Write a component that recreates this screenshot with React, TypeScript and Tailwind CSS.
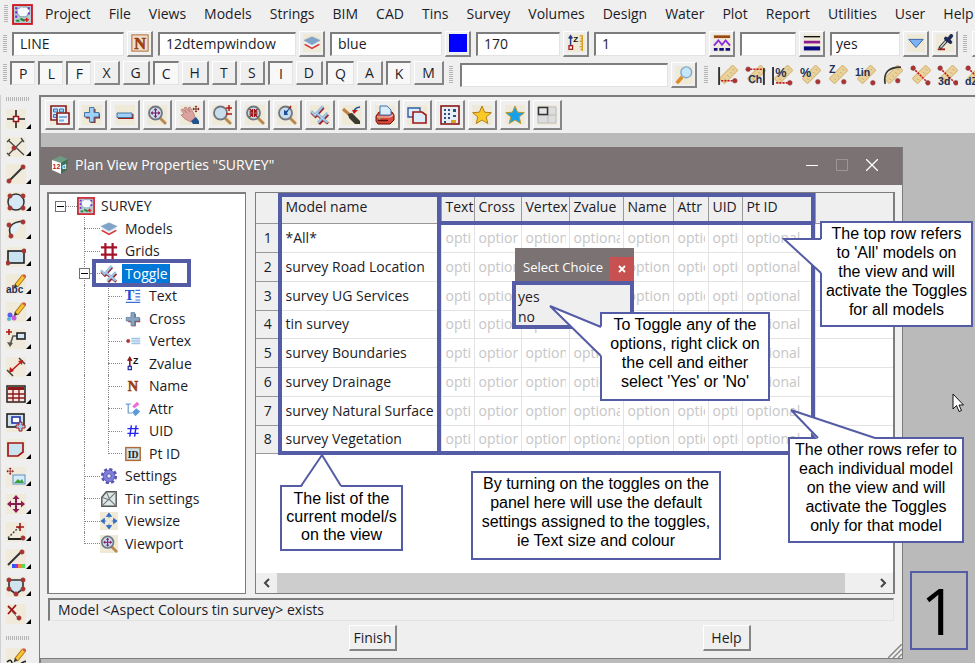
import { ReactNode } from 'react';
import clsx from 'clsx';

const DARK = '#8b1a1a';
const SKY = '#9fd0f5';

const ruler = (
    <g>
        <rect x="-9" y="-3.5" width="18" height="7" rx="1" transform="translate(11 9) rotate(-45)" fill="#ead29c" stroke="#d6b878" />
        <path d="M7 13l1 1M10 10l1 1M13 7l1 1M15 4l1 1" stroke="#a9853f" strokeWidth=".8" />
    </g>
);

const lens = (
    <>
        <path d="M13 13l5 5" stroke="#b98a4e" strokeWidth="3" strokeLinecap="round" />
        <circle cx="8.500" cy="8" r="6.500" fill="#c9dcec" stroke="#6f7780" strokeWidth="1.800" />
    </>
);

const ticks = (
    <>
        <path d="M1.500 7.500l4 4L13.500 2.500M8 10.500l10 8M18 9.500l-9 9.500" fill="none" stroke="#a01c28" strokeWidth="2.800" />
        <path d="M1 6l4 4L13 1M7.500 9l10 8.500M17.500 8l-9.500 9.500" fill="none" stroke="#8fb6da" strokeWidth="2.600" />
        <path d="M1 6l4 4L13 1M7.500 9l10 8.500M17.500 8l-9.500 9.500" fill="none" stroke="#b8d6ee" strokeWidth="1" />
    </>
);

const pencil = (
    <>
        <path d="M18 2L10 12" stroke="#a56a14" strokeWidth="4.600" />
        <path d="M18 2L10.500 11.500" stroke="#f6c433" strokeWidth="3" />
        <path d="M17 1l3 2" stroke="#d9534f" strokeWidth="2.500" />
        <path d="M9 10l2.500 2.500-4 2z" fill="#333" />
    </>
);

const dot = (x: number, y: number) => <circle cx={x} cy={y} r="2.200" fill="#b03030" stroke="#8d4a4a" strokeWidth=".6" />;

const moveArrows = (color: string) => (
    <path d="M10 1l3.500 4h-2.500v4h4V6.500L19 10l-4 3.500V11h-4v4h2.500L10 19l-3.500-4H9v-4H5v2.500L1 10l4-3.500V9h4V5H6.500z" fill={color} />
);

const magnet = (x: number, y: number, s: number, color: string) => (
    <g transform={`translate(${x} ${y}) scale(${s})`}>{moveArrows(color)}</g>
);

const nLetter = (
    <text x="10" y="16.500" textAnchor="middle" fontSize="18" fontWeight="700" fontFamily="Liberation Serif, serif" fill="#a8410e" stroke="#8d360c" strokeWidth=".6">N</text>
);

const small = (x: number, y: number, text: string, size = 9, color = '#22305a') => (
    <text x={x} y={y} fontSize={size} fontWeight="700" fontFamily="Liberation Sans, sans-serif" fill={color}>{text}</text>
);

const star = (fill: string, stroke: string) => (
    <path d="M10 1l2.600 6.200 6.700.5-5.100 4.300 1.600 6.500L10 15l-5.800 3.500 1.600-6.500L.7 7.700l6.700-.5z" fill={fill} stroke={stroke} />
);

const icons: Record<string, ReactNode> = {
    app: (
        <>
            <rect x="1" y="1" width="18" height="18" fill="#b4ccd2" stroke="#cf1b24" strokeWidth="1.800" />
            <path d="M5 7q-1-3 2-3 1-2 4-1 4-1 5 2 2 3-1 5-1 3-4 2-4 1-5-2-2-1-1-3z" fill="#f6fbff" stroke="#8fa9b8" />
            <path d="M3 4h2M3 8h2M3 12h2M15 4h2M15 9h2" stroke="#7b2bd0" strokeWidth="2" />
            <path d="M4 16h3M8 14l4 2" stroke="#1d8a3a" strokeWidth="2" />
            <path d="M14 13v4M12 15h4" stroke="#e01b1b" strokeWidth="1.500" />
        </>
    ),
    cube: (
        <>
            <path d="M10 1l8 3-7 4-9-3z" fill="#6d9b84" />
            <path d="M2 5l9 3v11l-9-4z" fill="#fff" />
            <path d="M11 8l7-4-1 11-6 4z" fill="#3f7159" />
            {small(2.5, 14, '12', 7, '#c41919')}
            {small(12, 14, 'd', 7, '#fff')}
        </>
    ),
    name: (
        <>
            <rect x="1" y="1" width="18" height="18" fill="#f0dfcb" stroke="#a8622f" />
            {nLetter}
        </>
    ),
    nameBare: nLetter,
    models: (
        <>
            <path d="M1 12l9 5 9-5-9-4z" fill="#d83434" />
            <path d="M1 10l9 5 9-5-9-4z" fill="#e8eef5" />
            <path d="M1 7l9 5 9-5-9-4z" fill="#7fa3c9" stroke="#8aa6c2" strokeWidth=".6" />
        </>
    ),
    blue: <rect width="20" height="20" fill="#0000ff" />,
    zruler: (
        <>
            <path d="M4 14V3M2 5l2-3 2 3" fill="none" stroke="#243a8f" strokeWidth="1.600" />
            <rect x="2.200" y="13" width="4" height="4" fill="#fff" stroke="#a01616" strokeWidth="1.400" />
            {small(7, 9, 'Z', 9, '#111')}
            <path d="M17 1v18M14 2h3M15 5h2M14 8h3M15 11h2M14 14h3M15 17h2" stroke="#d3a029" strokeWidth="1.500" />
        </>
    ),
    zvalue: (
        <>
            <path d="M6 14V3M3.500 6L6 2l2.500 4" fill="none" stroke="#8b1a1a" strokeWidth="2" />
            <rect x="4" y="13" width="4" height="4" fill="#fff" stroke="#2432a8" strokeWidth="1.600" />
            {small(10, 10, 'Z', 11, '#111')}
        </>
    ),
    lineStyle: (
        <>
            <path d="M1 3h18" stroke="#9a4a10" strokeWidth="3" />
            <path d="M1 13l5-6 4 5 4-5 5 6" fill="none" stroke="#8a2be2" strokeWidth="2" />
            <path d="M1 17h4M7 17h5M14 17h5" stroke="#101080" strokeWidth="3" />
        </>
    ),
    weight: (
        <>
            <path d="M1 3h18" stroke="#111" strokeWidth="1.500" />
            <path d="M1 9h18" stroke="#8b1a8b" strokeWidth="3" />
            <path d="M1 16h18" stroke="#0a0a80" strokeWidth="4.500" />
        </>
    ),
    down: <path d="M2 6h16l-8 9z" fill="#7fb2f5" stroke="#2e5ca8" />,
    dropper: (
        <>
            <path d="M2 17h8" stroke="#a01616" strokeWidth="2" />
            <path d="M4 16l8-9" stroke="#333" strokeWidth="3.600" />
            <path d="M5 15l6-7" stroke="#cfd8e0" strokeWidth="1.500" />
            <path d="M11 5l5 4M13 7l4-5" stroke="#1c2a55" strokeWidth="4" strokeLinecap="round" />
        </>
    ),
    search: (
        <>
            <path d="M8 12l-6 7" stroke="#e08a2b" strokeWidth="4" />
            <circle cx="12.500" cy="7" r="6" fill="#c3e6fa" stroke="#7fa8c9" strokeWidth="1.500" />
        </>
    ),
    rulerOffset: <>{ruler}<path d="M2 2v17" stroke="#333" strokeWidth="1.800" /><path d="M4 15h11" stroke="#c41919" strokeDasharray="2 1" strokeWidth="1.500" />{dot(17, 15)}</>,
    rulerCh: <>{ruler}<path d="M18 3v16" stroke="#333" strokeWidth="1.800" /><path d="M5 4h11" stroke="#c41919" strokeDasharray="2 1" strokeWidth="1.500" />{dot(3, 4)}{small(3, 17, 'Ch', 10)}</>,
    rulerGrade: <>{ruler}<path d="M1 2v17" stroke="#333" strokeWidth="1.800" /><path d="M4 17h11" stroke="#c41919" strokeDasharray="2 1" strokeWidth="1.500" />{dot(17, 17)}{small(3, 11, '%', 12)}</>,
    rulerPercent: <>{ruler}{dot(17, 16)}{small(0, 11, '%', 12)}</>,
    rulerZ: <>{ruler}{dot(16, 16)}{small(2, 8, 'Z', 10)}</>,
    rulerIn: <>{ruler}{dot(17, 17)}{small(0, 10, '1in', 10)}</>,
    rulerArc: <>{ruler}<path d="M3 18Q0 2 18 2" fill="none" stroke="#333" strokeWidth="1.600" />{dot(15, 15)}</>,
    ruler3: <>{ruler}<path d="M3 3l14 14" stroke="#c41919" strokeDasharray="2 1" strokeWidth="1.500" />{dot(3, 3)}{dot(17, 17)}</>,
    ruler3d: <>{ruler}<path d="M3 3l14 14" stroke="#c41919" strokeDasharray="2 1" strokeWidth="1.500" />{dot(3, 3)}{dot(18, 17)}{small(1, 19, '3d', 10)}</>,
    rulerDz: <>{ruler}<path d="M3 3l14 14" stroke="#c41919" strokeDasharray="2 1" strokeWidth="1.500" />{dot(3, 3)}{small(0, 19, 'dZ', 10)}</>,
    windows: (
        <>
            <path d="M1 1h15v14H1z" fill="#dcecfa" stroke={DARK} strokeWidth="1.600" />
            <path d="M3.500 4h4v3h-4zM9.500 4h4v3h-4zM3.500 9.500h3v3h-3z" fill={SKY} stroke="#3c72b5" />
            <path d="M7 8h12v11H7z" fill="#eaf4fd" stroke={DARK} strokeWidth="1.600" />
            <path d="M9 12h8M9 15.500h5" stroke="#7fb0e0" strokeWidth="2" />
        </>
    ),
    plus: (
        <>
            <path d="M8.500 4h5v4.500H18v5h-4.500V18h-5v-4.500H4v-5h4.500z" fill="#a01c1c" />
            <path d="M7.500 2.500h4.500v5h5v4.500h-5v5H7.500v-5h-5V7.500h5z" fill={SKY} stroke="#4775a8" />
        </>
    ),
    minus: (
        <>
            <path d="M3 9h15.500v5H3z" fill="#a01c1c" />
            <path d="M2 8h15v4.500H2z" fill={SKY} stroke="#4775a8" />
        </>
    ),
    zoomExtents: <>{lens}{magnet(3, 2.5, 0.55, '#7b1560')}</>,
    pan: (
        <>
            <path d="M1 5l2-1 4 4-3-5 2-1 4 5-2-4 2-1 4 7 1 4-4 4-6-3-4-4 3-1z" fill="#dba3a0" stroke="#b27c78" strokeWidth=".8" />
            <path d="M11 16l5-4 3 4v3h-6z" fill="#24528c" />
            {magnet(12, 0, 0.4, '#7b1515')}
        </>
    ),
    zoomInOut: <>{lens}<path d="M14 3h6M17 0v6M14 9h6" stroke="#b01616" strokeWidth="1.500" /></>,
    zoomShrink: <>{lens}<path d="M4.500 4l3 3v-3M7.500 7h-3M12.500 4l-3 3v-3M9.500 7h3M4.500 12l3-3v3M7.500 9h-3M12.500 12l-3-3v3M9.500 9h3" fill="none" stroke="#9b1515" strokeWidth="1.300" /></>,
    zoomPrev: <>{lens}<path d="M7 10V5l2 1 4-3-3 5 1 2z" fill="#1f4e9b" /><path d="M12 4l2-3" stroke="#a01616" strokeWidth="1.500" /></>,
    toggle: ticks,
    brush: (
        <>
            <path d="M1 4l8 7" stroke="#c08040" strokeWidth="3" />
            <path d="M6 9l4-1 8 8v3h-5l-6-6z" fill="#3a3a30" />
            <path d="M12 7Q12 3 18 2" fill="none" stroke="#1f4e9b" strokeWidth="1.500" />
            <path d="M10 5h6l-4 4z" fill="#c41919" />
        </>
    ),
    printer: (
        <>
            <path d="M1 11l3-4h13l2 3v5l-4 4H3l-2-3z" fill="#d84a3c" stroke="#701010" />
            <path d="M5 1h7l4 4v5H5z" fill="#dcecfa" stroke="#3c72b5" />
            <path d="M2 12h13l3-2" fill="none" stroke="#f4d6d0" strokeWidth="1.200" />
            <path d="M3 15.500h10" stroke="#5a1010" strokeWidth="1.500" />
            <circle cx="4.500" cy="13.500" r="1" fill="#4be04b" />
        </>
    ),
    copies: (
        <>
            <path d="M1 3h12v9H1z" fill="#dcecfa" stroke="#2d5fa5" strokeWidth="1.400" />
            <path d="M6 7h9l4 3v8H6z" fill="#dcecfa" stroke="#a01616" strokeWidth="1.600" />
        </>
    ),
    calculator: (
        <>
            <rect x="1" y="1" width="18" height="18" fill="#e8eef5" stroke={DARK} strokeWidth="1.600" />
            <path d="M4 4h2v2H4zM8 4h2v2H8zM13 4h3v3h-3zM4 8h2v2H4zM8 8h2v2H8zM4 12h2v2H4zM8 12h2v2H8zM4 16h2v2H4zM13 10h3v2h-3z" fill="#2f4f7d" />
            <path d="M11 15h5v3h-5z" fill="#d9a520" />
        </>
    ),
    starGold: star('#fbc926', '#b07d1c'),
    starBlue: star('#18a0e8', '#b59a3a'),
    layout: (
        <>
            <path d="M1 2h18v16H1z" fill="#ddd" stroke="#bbb" />
            <path d="M1 10h18M11 2v16" stroke="#bbb" />
            <path d="M1.500 2.500h9v7h-9z" fill="#e6e6e6" stroke="#333" strokeWidth="1.500" />
        </>
    ),
    point: (
        <>
            <path d="M10 1v18M1 10h18" stroke="#222" strokeWidth="1.600" />
            <rect x="7.500" y="7.500" width="5" height="5" fill="#fff" stroke="#a01616" strokeWidth="1.500" />
        </>
    ),
    intersect: <><path d="M2 3l16 15M2 18L17 3M1 5l3-3M15 1l3 4M1 16l3 3" stroke="#444" strokeWidth="1.300" />{dot(8, 11)}</>,
    line: <><path d="M3 17L17 3" stroke="#333" strokeWidth="2" />{dot(3, 17)}{dot(17, 3)}</>,
    circle: <><circle cx="10" cy="10" r="8" fill="#d4e9f5" stroke="#333" strokeWidth="1.500" />{dot(4, 4)}{dot(17, 4)}{dot(4, 16)}{dot(17, 16)}</>,
    arc: <><path d="M5 17Q-1 4 17 2L11 12z" fill="#e3f0f7" /><path d="M5 17Q-1 4 17 2" fill="none" stroke="#333" strokeWidth="1.600" />{dot(5, 17)}{dot(3, 6)}{dot(17, 3)}</>,
    rect: <><rect x="2" y="4" width="16" height="12" fill="#c9e4f0" stroke="#222" strokeWidth="1.600" />{dot(2, 16)}{dot(18, 4)}</>,
    abc: <>{pencil}{small(0, 19, 'abc', 10)}</>,
    paint: <>{pencil}<circle cx="4" cy="13" r="2.500" fill="#5c5cf0" /><circle cx="8" cy="16" r="2.500" fill="#c95cd8" /><circle cx="3" cy="17" r="2" fill="#4ab8e0" /></>,
    leader: (
        <>
            <path d="M3 0v6M0 3h6" stroke="#b01616" strokeWidth="1.600" />
            <path d="M11 7H7L4 16" fill="none" stroke="#555" strokeWidth="1.600" />
            <path d="M1 13l3 5 3-4z" fill="#555" />
            <rect x="11" y="4" width="8" height="6" fill="#d4e9f5" stroke="#222" strokeWidth="1.600" />
        </>
    ),
    dimension: (
        <>
            <path d="M1 13l6 6M13 1l6 6" stroke="#444" strokeWidth="1.600" />
            <path d="M5 14L15 5" stroke="#c41919" strokeWidth="1.600" />
            <path d="M3 16l1-6 4 4zM17 3l-5 1 4 4z" fill="#c41919" />
        </>
    ),
    table: (
        <>
            <rect x="1" y="2" width="18" height="16" fill="#f6e5e5" stroke="#222" strokeWidth="1.500" />
            <path d="M2 3h16v3H2z" fill={DARK} />
            <path d="M1 10h18M1 14h18M7 5v13M13 5v13" stroke={DARK} strokeWidth="1.400" />
        </>
    ),
    insert: (
        <>
            <rect x="1" y="2" width="17" height="13" fill="#cfe2f0" stroke="#222" strokeWidth="1.600" />
            <rect x="6" y="5" width="8" height="6" fill="#fff" stroke="#2432a8" strokeWidth="1.600" />
            <path d="M13 10h3v3h3v3h-3v3h-3v-3h-3v-3h3z" fill={SKY} stroke="#a01616" />
        </>
    ),
    polygon: <path d="M2 4h15v9l-5 4H2z" fill="#c9e4ee" stroke="#a01616" strokeWidth="1.700" />,
    image: (
        <>
            {magnet(0, 0, 0.42, '#8b1a1a')}
            <rect x="7" y="8" width="12" height="9" fill="#d6ecfb" stroke="#5a8fc8" />
            <path d="M8 16l4-4 2 2 2-2 2 4z" fill="#3da03d" />
        </>
    ),
    move: moveArrows('#8b1a50'),
    angle: <><path d="M2 17h15" stroke="#222" strokeWidth="2" /><path d="M2 16L13 5" stroke="#444" strokeDasharray="2 1.500" strokeWidth="1.500" /><path d="M14 1v8M10 5h8" stroke="#a01616" strokeWidth="1.600" />{dot(17, 16)}</>,
    lineColour: (
        <>
            <path d="M2 16L15 3" stroke="#333" strokeWidth="2" />
            {dot(16, 3)}
            <path d="M6 17h3" stroke="#2b5cf0" strokeWidth="4" />
            <path d="M9 17h3" stroke="#b22bd0" strokeWidth="4" />
            <path d="M12 17h3" stroke="#f08a2b" strokeWidth="4" />
            <path d="M15 17h4" stroke="#57d957" strokeWidth="4" />
        </>
    ),
    shape: <><path d="M3 3h14v9l-7 5-7-5z" fill="#cfe4ee" stroke="#333" strokeWidth="1.600" />{dot(3, 3)}{dot(17, 3)}{dot(3, 12)}{dot(17, 12)}{dot(10, 17)}</>,
    remove: <><path d="M2 2l8 8M10 1L2 10" stroke="#a01616" strokeWidth="1.800" /><path d="M6 8l6 6" stroke="#888" />{dot(13, 14)}</>,
    sketch: <>{pencil}<path d="M1 14q4-4 5 1t8 1 5-2" fill="none" stroke="#222" strokeWidth="1.600" /></>,
    grids: <path d="M6 1v18M14 1v18M1 6h18M1 14h18" stroke="#a5122a" strokeWidth="2.400" />,
    textRow: (
        <>
            <text x="-1" y="15" fontSize="19" fontWeight="700" fontFamily="Liberation Serif, serif" fill="#1c4fd0">T</text>
            <path d="M13 3h6M13 7h6M13 11h6M13 15h6M1 18h18" stroke="#3f6fd6" strokeWidth="1.500" />
        </>
    ),
    crossBare: (
        <>
            <path d="M8.500 3.500h5v5.500H19v5h-5.500v5h-5v-5H4V9h4.500z" fill="#a83a30" />
            <path d="M7.500 2h4.500v6h6v4.500h-6v6H7.500v-6h-6V8h6z" fill="#86a5c4" stroke="#6482a2" />
        </>
    ),
    vertex: <><path d="M8 7h11M8 10h11M8 13h11" stroke="#9fc3e6" strokeWidth="2" />{dot(4, 10)}</>,
    attr: (
        <>
            <path d="M1 4h6M4 4v11h5" fill="none" stroke="#6d9bd0" strokeWidth="1.500" />
            <path d="M9 7l6-6 3 3-6 5z" fill="#ea70d6" />
            <path d="M9 14l5-5 5 4-6 6z" fill="#5a9be0" />
        </>
    ),
    hash: <path d="M8 3L6 17M14 3l-2 14M3 7h14M3 13h14" stroke="#2424f0" strokeWidth="1.800" />,
    id: (
        <>
            <rect x="1" y="2" width="18" height="16" fill="#cfe2ea" stroke="#b06a38" strokeWidth="1.800" />
            <text x="10" y="14.500" textAnchor="middle" fontSize="12" fontWeight="700" fontFamily="Liberation Serif, serif" fill="#222">ID</text>
        </>
    ),
    settings: (
        <>
            <circle cx="10" cy="10" r="7.500" fill="none" stroke="#5555b0" strokeWidth="3" strokeDasharray="3.500 2.400" />
            <circle cx="10" cy="10" r="6.500" fill="#8080dc" stroke="#5a5ab8" />
            <circle cx="10" cy="10" r="2.500" fill="#e4e4fa" stroke="#4b4ba8" />
        </>
    ),
    tin: (
        <>
            <path d="M7 2h11v16H2V8z" fill="#dde9e8" stroke="#555" strokeWidth="1.600" />
            <path d="M2 18L18 2M7 2l4 9 7 7M2 8l9 3" fill="none" stroke="#777" strokeWidth="1.200" />
        </>
    ),
    viewsize: <path d="M10 1l3 4h-6zM10 19l3-4h-6zM1 10l4-3v6zM19 10l-4-3v6zM10 5v2M10 13v2M5 10h2M13 10h2" fill="#2f6bc4" stroke="#2f6bc4" strokeWidth=".8" />,
};

function Icon({ name, className = 'size-5' }: { name: string; className?: string }) {
    return (
        <svg viewBox="0 0 20 20" className={clsx('shrink-0', className)} aria-hidden="true">
            {icons[name]}
        </svg>
    );
}

const raised = 'border-t border-l border-r-2 border-b-2 border-t-white border-l-white border-r-[#858585] border-b-[#858585] bg-[#efefef]';
const sunken = 'border-t-2 border-l-2 border-r border-b border-t-[#7d7d7d] border-l-[#7d7d7d] border-r-[#e3e3e3] border-b-[#e3e3e3]';

const menus = ['Project', 'File', 'Views', 'Models', 'Strings', 'BIM', 'CAD', 'Tins', 'Survey', 'Volumes', 'Design', 'Water', 'Plot', 'Report', 'Utilities', 'User', 'Help'];

const fields = [
    { label: 'String name', value: 'LINE', icon: 'name', width: 'w-28' },
    { label: 'Model', value: '12dtempwindow', icon: 'models', width: 'w-[138px]' },
    { label: 'Colour', value: 'blue', icon: 'blue', width: 'w-28' },
    { label: 'Height', value: '170', icon: 'zruler', width: 'w-[84px]' },
    { label: 'Line style', value: '1', icon: 'lineStyle', width: 'w-28' },
    { label: 'Weight', value: '', icon: 'weight', width: 'w-14' },
];

const snaps = 'PLFXGCHTSIDQAKM'.split('');
const activeSnaps = 'PLFCIQK';

const measureTools = ['rulerOffset', 'rulerCh', 'rulerGrade', 'rulerPercent', 'rulerZ', 'rulerIn', 'rulerArc', 'ruler3', 'ruler3d', 'rulerDz'];

const viewTools = ['windows', 'plus', 'minus', 'zoomExtents', 'pan', 'zoomInOut', 'zoomShrink', 'zoomPrev', 'toggle', 'brush', 'printer', 'copies', 'calculator', 'starGold', 'starBlue', 'layout'];

const drawTools = ['point', 'intersect', 'line', 'circle', 'arc', 'rect', 'abc', 'paint', 'leader', 'dimension', 'table', 'insert', 'polygon', 'image', 'move', 'angle', 'lineColour', 'shape', 'remove'];

const tree = [
    { label: 'SURVEY', icon: 'app', level: 0 },
    { label: 'Models', icon: 'models', level: 1 },
    { label: 'Grids', icon: 'grids', level: 1 },
    { label: 'Toggle', icon: 'toggle', level: 1 },
    { label: 'Text', icon: 'textRow', level: 2 },
    { label: 'Cross', icon: 'crossBare', level: 2 },
    { label: 'Vertex', icon: 'vertex', level: 2 },
    { label: 'Zvalue', icon: 'zvalue', level: 2 },
    { label: 'Name', icon: 'nameBare', level: 2 },
    { label: 'Attr', icon: 'attr', level: 2 },
    { label: 'UID', icon: 'hash', level: 2 },
    { label: 'Pt ID', icon: 'id', level: 2 },
    { label: 'Settings', icon: 'settings', level: 1 },
    { label: 'Tin settings', icon: 'tin', level: 1 },
    { label: 'Viewsize', icon: 'viewsize', level: 1 },
    { label: 'Viewport', icon: 'zoomExtents', level: 1 },
];

const columns = [
    { label: 'Text', width: 'w-[33px]' },
    { label: 'Cross', width: 'w-[47px]' },
    { label: 'Vertex', width: 'w-[48px]' },
    { label: 'Zvalue', width: 'w-[54px]' },
    { label: 'Name', width: 'w-[50px]' },
    { label: 'Attr', width: 'w-[35px]' },
    { label: 'UID', width: 'w-[34px]' },
    { label: 'Pt ID', width: 'w-[73px]' },
];

const models = ['*All*', 'survey Road Location', 'survey UG Services', 'tin survey', 'survey Boundaries', 'survey Drainage', 'survey Natural Surface', 'survey Vegetation'];

function Grip({ horizontal = false }: { horizontal?: boolean }) {
    return horizontal ? (
        <div className="h-1 w-6 shrink-0 bg-[repeating-linear-gradient(90deg,#b5b5b5_0_1px,transparent_1px_2px)]" />
    ) : (
        <div className="h-[18px] w-1 shrink-0 bg-[repeating-linear-gradient(180deg,#b5b5b5_0_1px,transparent_1px_2px)]" />
    );
}

function MenuBar() {
    return (
        <nav className="flex h-7 items-center pl-1">
            <Grip />
            <Icon name="app" className="ml-1 size-[21px]" />
            <div className="ml-3 flex gap-[18px]">
                {menus.map((menu) => (
                    <button key={menu} type="button">{menu}</button>
                ))}
            </div>
        </nav>
    );
}

function IconButton({ icon, label }: { icon: string; label: string }) {
    return (
        <button type="button" aria-label={label} className={clsx('flex size-[26px] shrink-0 items-center justify-center', raised)}>
            <Icon name={icon} className="size-[18px] bg-[#efe9d8]" />
        </button>
    );
}

function PropertyBar() {
    return (
        <div className="flex h-[31px] items-center gap-[5px] pl-[3px]">
            <Grip />
            {fields.map((field) => (
                <div key={field.label} className="flex shrink-0 items-center gap-[3px]">
                    <input aria-label={field.label} defaultValue={field.value} className={clsx('h-6 bg-white pb-0.5 pl-1.5', sunken, field.width)} />
                    <IconButton icon={field.icon} label={`Choose ${field.label}`} />
                </div>
            ))}
            <div className="flex shrink-0 items-center gap-[3px]">
                <select aria-label="Tinable" className={clsx('h-6 w-[70px] appearance-none bg-white pb-0.5 pl-1', sunken)}>
                    <option>yes</option>
                    <option>no</option>
                </select>
                <IconButton icon="down" label="Open list" />
                <IconButton icon="dropper" label="Pick from string" />
            </div>
            <Grip />
            <IconButton icon="lineStyle" label="More" />
        </div>
    );
}

function SnapBar() {
    return (
        <div className="flex h-9 items-start pl-[3px] pt-[2px]">
            <div className="flex w-[446px] shrink-0 items-center gap-[3px]">
                <Grip />
                {snaps.map((snap) => (
                    <button
                        key={snap}
                        type="button"
                        aria-pressed={activeSnaps.includes(snap)}
                        className={clsx('h-6 min-w-[25px] px-[7px] leading-5', activeSnaps.includes(snap) ? [sunken, 'bg-[#f8f8f8]'] : raised)}
                    >
                        {snap}
                    </button>
                ))}
            </div>
            <div className="flex shrink-0 items-center gap-[3px] pt-px">
                <Grip />
                <input aria-label="Command" className={clsx('ml-1 h-6 w-[208px] bg-white px-1.5', sunken)} />
                <IconButton icon="search" label="Search" />
                <div className="ml-1 flex items-center gap-[9px]">
                    <Grip />
                    <div className="flex gap-[6px]">
                        {measureTools.map((tool) => (
                            <button key={tool} type="button" aria-label={tool} className="odd:w-[22px] even:w-[21px]">
                                <Icon name={tool} className="size-[21px]" />
                            </button>
                        ))}
                    </div>
                </div>
            </div>
        </div>
    );
}

function DrawBar() {
    return (
        <aside className="flex w-[39px] shrink-0 flex-col overflow-hidden border-l border-[#d0d0d0] pl-[5px] pt-[2px]">
            <Grip horizontal />
            <div className="mt-1 flex flex-col">
                {drawTools.map((tool) => (
                    <button key={tool} type="button" aria-label={tool} className="flex items-center odd:h-7 even:h-[27px]">
                        <Icon name={tool} className="size-5 bg-[#f0eadb]" />
                        <svg viewBox="0 0 5 5" className="mb-1 size-[5px] self-end" aria-hidden="true">
                            <path d="M5 0v5H0z" />
                        </svg>
                    </button>
                ))}
            </div>
            <div className="my-2">
                <Grip horizontal />
            </div>
            <Icon name="sketch" className="size-5 bg-[#f0eadb]" />
        </aside>
    );
}

const dotted = 'border-dotted border-[#888]';

function TreeRow({ label, icon, level, last, lastChild }: { label: string; icon: string; level: number; last: boolean; lastChild: boolean }) {
    const expander = (
        <button type="button" aria-label={`Collapse ${label}`} className="relative z-10 flex size-[11px] shrink-0 items-center justify-center border border-[#707070] bg-white">
            <span className="h-px w-[7px] bg-black" />
        </button>
    );

    return (
        <li className="flex items-center odd:h-[22px] even:h-[23px]">
            {level === 0 && (
                <div className="flex w-7 shrink-0 items-center pl-1.5">
                    {expander}
                    <span className={clsx('flex-1 border-t', dotted)} />
                </div>
            )}
            {level === 1 && (
                <div className="relative ml-[35px] flex w-4 shrink-0 items-center self-stretch">
                    <span className={clsx('absolute left-0 top-0 border-l', dotted, last ? 'h-1/2' : 'h-full')} />
                    {label === 'Toggle' && <span className="-ml-[5px] flex">{expander}</span>}
                    <span className={clsx('flex-1 border-t', dotted)} />
                </div>
            )}
            {level === 2 && (
                <>
                    <div className={clsx('ml-[35px] w-6 shrink-0 self-stretch border-l', dotted)} />
                    <div className="relative flex w-[14px] shrink-0 items-center self-stretch">
                        <span className={clsx('absolute left-0 top-0 border-l', dotted, lastChild ? 'h-1/2' : 'h-full')} />
                        <span className={clsx('flex-1 border-t', dotted)} />
                    </div>
                </>
            )}
            <span className={clsx('flex shrink-0', level === 0 && 'w-6', level === 1 && 'w-[25px]', level === 2 && 'w-[27px] pl-[3px]')}>
                <Icon name={icon} className={clsx(label.startsWith('View') && 'bg-[#efe9d8]', level === 2 ? 'size-4' : 'size-[18px]')} />
            </span>
            <span className={clsx('whitespace-nowrap', label === 'Toggle' && '-ml-[3px] bg-[#0078d7] pl-[3px] pr-0.5 text-white')}>{label}</span>
        </li>
    );
}

function TreePanel() {
    return (
        <div className={clsx('relative w-[199px] shrink-0 border-r-[#7d7d7d]! border-b-[#7d7d7d]! bg-white pt-px', sunken)}>
            <ul>
                {tree.map((node) => (
                    <TreeRow key={node.label} {...node} last={node.label === 'Viewport'} lastChild={node.label === 'Pt ID'} />
                ))}
            </ul>
            <div className="absolute left-[43px] top-[65px] h-7 w-[99px] border-4 border-[#555ca6]" />
        </div>
    );
}

function ToggleGrid() {
    return (
        <div className="relative flex min-w-0 flex-1 flex-col overflow-hidden border border-r-2 border-[#7d7d7d] bg-white">
            <table className="w-full table-fixed border-collapse text-left">
                <thead>
                    <tr className="h-[30px] bg-[#efefef]">
                        <th className="w-[22px] border-b border-r border-[#999]" />
                        <th className="w-[163px] border-b border-r border-[#999] pb-0.5 pl-[7px] font-normal">Model name</th>
                        {columns.map((column) => (
                            <th key={column.label} className={clsx('border-b border-r border-[#999] pb-0.5 pl-1 font-normal', column.width)}>
                                {column.label}
                            </th>
                        ))}
                        <th className="border-b border-[#999]" />
                    </tr>
                </thead>
                <tbody>
                    {models.map((model, i) => (
                        <tr key={model} className="h-[29px] nth-[4n]:h-7">
                            <th className="border-b border-r border-[#999] bg-[#efefef] pl-0.5 text-center font-normal">{i + 1}</th>
                            <td className="whitespace-nowrap border-b border-r border-[#e3e3e3] pl-[7px]">{model}</td>
                            {columns.map((column) => (
                                <td key={column.label} className="border-b border-r border-[#e3e3e3] pl-1 pr-[3px] text-[#c6c6c6]">
                                    <div className="overflow-hidden">optional</div>
                                </td>
                            ))}
                            <td className="border-b border-[#e3e3e3]" />
                        </tr>
                    ))}
                </tbody>
            </table>
            <div className="mt-auto flex h-5 items-stretch bg-[#efefef]">
                <button type="button" aria-label="Scroll left" className="flex w-[21px] items-center justify-center">
                    <svg viewBox="0 0 10 10" className="size-2.5"><path d="M7 1L3 5l4 4" fill="none" stroke="#444" strokeWidth="2" /></svg>
                </button>
                <div className="mr-[27px] flex-1 bg-[#cdcdcd]" />
                <button type="button" aria-label="Scroll right" className="flex w-[21px] items-center justify-center">
                    <svg viewBox="0 0 10 10" className="size-2.5"><path d="M3 1l4 4-4 4" fill="none" stroke="#444" strokeWidth="2" /></svg>
                </button>
            </div>
            <div className="absolute left-[22px] top-0 h-[262px] w-[163px] border-4 border-[#555ca6]" />
            <div className="absolute left-[181px] top-0 h-8 w-[378px] border-4 border-[#555ca6]" />
            <div className="absolute left-[181px] top-7 h-[234px] w-[378px] border-4 border-t-[3px] border-[#555ca6]" />
        </div>
    );
}

function PropertiesWindow() {
    return (
        <section className="mb-1 -ml-px mr-[72px] mt-3.5 flex flex-1 flex-col border-b border-r border-[#7d7d7d] bg-[#efefef]">
            <header className="flex h-[38px] items-center bg-[#7b7373] pb-0.5 pl-2.5 pr-6 text-white">
                <Icon name="cube" className="size-5" />
                <h1 className="ml-[5px] flex-1">Plan View Properties "SURVEY"</h1>
                <div className="flex gap-[18px]">
                    <button type="button" aria-label="Minimise">
                        <svg viewBox="0 0 12 12" className="size-3"><path d="M0 6.500h12" stroke="#fff" /></svg>
                    </button>
                    <button type="button" aria-label="Maximise" disabled>
                        <svg viewBox="0 0 12 12" className="size-3"><path d="M.5.500h11v11H.5z" fill="none" stroke="#9c9696" /></svg>
                    </button>
                    <button type="button" aria-label="Close">
                        <svg viewBox="0 0 12 12" className="size-3"><path d="M0 0l12 12M12 0L0 12" stroke="#fff" strokeWidth="1.300" /></svg>
                    </button>
                </div>
            </header>
            <div className="flex flex-1 gap-[9px] px-[7px] pt-[7px]">
                <TreePanel />
                <ToggleGrid />
            </div>
            <p role="status" className={clsx('mx-2 mt-1 h-[23px] pl-2 leading-5', sunken)}>Model &lt;Aspect Colours tin survey&gt; exists</p>
            <footer className="relative flex h-[37px] items-start gap-[306px] pl-[309px] pt-1">
                <button type="button" className={clsx('h-[26px] w-12', raised)}>Finish</button>
                <button type="button" className={clsx('h-[26px] w-12', raised)}>Help</button>
                <svg viewBox="0 0 14 14" className="absolute bottom-0 right-0 size-3.5" aria-hidden="true">
                    <path d="M0 14L14 0M5 14l9-9M10 14l4-4" stroke="#8a8a8a" strokeWidth="1.500" />
                </svg>
            </footer>
        </section>
    );
}

function SelectChoice() {
    return (
        <div className="absolute left-[512px] top-[248px] w-[122px]">
            <div className="ml-[3px] flex h-[33px] items-end justify-between bg-[#7b7373] pl-2 text-white">
                <h2 className="self-center pt-1 text-[13px]">Select Choice</h2>
                <button type="button" aria-label="Close choices" className="flex size-6 items-center justify-center bg-[#c75050]">
                    <svg viewBox="0 0 8 8" className="size-2"><path d="M1 1l6 6M7 1L1 7" stroke="#fff" strokeWidth="1.800" /></svg>
                </button>
            </div>
            <div className="flex h-12 flex-col items-start border-4 border-[#555ca6] bg-[#efefef] pl-0.5 pt-0.5 leading-5">
                <button type="button">yes</button>
                <button type="button">no</button>
            </div>
        </div>
    );
}

interface CalloutProps {
    className: string;
    lines: string[];
    tail?: string;
    cover?: string;
}

// tail is the open outline of the pointer, cover hides the box border at its base
function Callout({ className, lines, tail, cover }: CalloutProps) {
    return (
        <div className={clsx('absolute border-2 border-[#555ca6] bg-white text-center font-["Liberation_Sans",Arial,sans-serif] text-[16px] text-black', className)}>
            {tail && (
                <svg className="absolute -left-0.5 -top-0.5 size-px overflow-visible" aria-hidden="true">
                    <path d={cover} fill="#fff" />
                    <path d={tail} fill="none" stroke="#555ca6" strokeWidth="2" />
                </svg>
            )}
            <p className="relative whitespace-nowrap">
                {lines.map((line) => (
                    <span key={line} className="block">{line}</span>
                ))}
            </p>
        </div>
    );
}

export default function App() {
    return (
        <div className='relative flex h-screen min-h-[640px] flex-col overflow-hidden bg-[#efefef] font-["Open_Sans","Noto_Sans",sans-serif] text-[14px] leading-5 text-[#1c1c28]'>
            <MenuBar />
            <PropertyBar />
            <SnapBar />
            <div className="flex min-h-0 flex-1">
                <DrawBar />
                <main className="flex min-w-0 flex-1 flex-col border-l-2 border-t-2 border-[#7d7d7d] bg-[#bababa]">
                    <div className="flex h-9 items-center gap-[3px] bg-[#efefef] pl-1">
                        {viewTools.map((tool) => (
                            <button key={tool} type="button" aria-label={tool} className={clsx('flex h-[30px] items-center justify-center odd:w-[30px] even:w-[29px]', raised)}>
                                <Icon name={tool} className="size-5 bg-[#efe9d8]" />
                            </button>
                        ))}
                    </div>
                    <PropertiesWindow />
                </main>
            </div>

            <SelectChoice />
            <Callout
                className="left-[820px] top-[221px] h-[106px] w-[153px] pt-px leading-[19px]"
                lines={['The top row refers', "to 'All' models on", 'the view and will', 'activate the Toggles', 'for all models']}
                tail="M1 18H-36L1 52"
                cover="M3 18H-36L1 52H3z"
            />
            <Callout
                className="left-[600px] top-[312px] h-[89px] w-[170px] pt-px leading-[19px]"
                lines={['To Toggle any of the', 'options, right click on', 'the cell and either', "select 'Yes' or 'No'"]}
                tail="M1 15L-50 -6L1 44"
                cover="M3 15L-50 -6L1 44H3z"
            />
            <Callout
                className="left-[788px] top-[437px] h-[106px] w-[176px] pt-px leading-[19px]"
                lines={['The other rows refer to', 'each individual model', 'on the view and will', 'activate the Toggles', 'only for that model']}
                tail="M30 1L3 -27L87 1"
                cover="M30 3L3 -27L87 1V3z"
            />
            <Callout
                className="left-[280px] top-[485px] h-[66px] w-[123px] pt-[3px] leading-[18px]"
                lines={['The list of the', 'current model/s', 'on the view']}
                tail="M21 1L42 -30L61 1"
                cover="M21 3L42 -30L61 1V3z"
            />
            <Callout
                className="left-[471px] top-[471px] h-[89px] w-[250px] pt-px leading-[19px]"
                lines={['By turning on the toggles on the', 'panel here will use the default', 'settings assigned to the toggles,', 'ie Text size and colour']}
            />
            <div className="absolute left-[910px] top-[571px] flex h-[79px] w-[58px] items-center justify-center border-2 border-[#555ca6] text-[64px] text-black">
                1
            </div>
            <svg viewBox="0 0 12 20" className="absolute left-[952px] top-[393px] h-5 w-3" aria-hidden="true">
                <path d="M1 1v15l3.500-3.500L7 18.500l2.500-1L7 12h4.500z" fill="#fff" stroke="#111" />
            </svg>
        </div>
    );
}
